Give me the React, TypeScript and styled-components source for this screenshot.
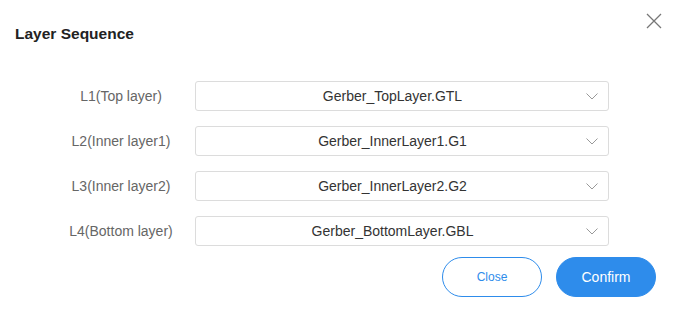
import React from "react";
import styled, { createGlobalStyle } from "styled-components";

const Global = createGlobalStyle`
  html, body { margin: 0; padding: 0; background: #fff; }
  body { font-family: "Liberation Sans", Arial, sans-serif; }
  * { box-sizing: border-box; }
`;

const Dialog = styled.div`
  width: 676px;
  height: 312px;
  background: #fff;
  display: flex;
  flex-direction: column;
`;

const Header = styled.div`
  position: relative;
  height: 81px;
  padding: 24px 15px 0;
`;

const Title = styled.h2`
  margin: 0;
  font-size: 15.5px;
  font-weight: bold;
  color: #222;
  line-height: 20px;
`;

const CloseIcon = styled.button`
  position: absolute;
  top: 13px;
  right: 14px;
  width: 16px;
  height: 16px;
  padding: 0;
  border: none;
  background: transparent;
  display: flex;
  cursor: pointer;
`;

const Rows = styled.div`
  display: flex;
  flex-direction: column;
  gap: 15px;
  padding-left: 47px;
`;

const Row = styled.div`
  display: flex;
  align-items: center;
`;

const Label = styled.div`
  width: 148px;
  text-align: center;
  font-size: 14px;
  color: #666;
`;

const Select = styled.div`
  width: 414px;
  height: 30px;
  border: 1px solid #dcdcdc;
  border-radius: 3px;
  display: flex;
  align-items: center;
  padding: 0 10px 0 3px;
`;

const SelectText = styled.span`
  flex: 1;
  text-align: center;
  font-size: 14px;
  color: #333;
`;

const Footer = styled.div`
  display: flex;
  justify-content: flex-end;
  gap: 14px;
  padding: 11px 20px 0 0;
`;

const Button = styled.button<{ $primary?: boolean }>`
  width: 100px;
  height: 40px;
  border-radius: 20px;
  font-family: "Liberation Sans", Arial, sans-serif;
  cursor: pointer;
  border: 1px solid #2e8ceb;
  background: ${(p) => (p.$primary ? "#2e8ceb" : "#fff")};
  color: ${(p) => (p.$primary ? "#fff" : "#2e8ceb")};
  font-size: ${(p) => (p.$primary ? "14px" : "12px")};
`;

const Chevron = () => (
  <svg width="12" height="7" viewBox="0 0 12 7" fill="none">
    <path d="M0.5 0.5 L6 6 L11.5 0.5" stroke="#999" strokeWidth="1" />
  </svg>
);

const layers = [
  ["L1(Top layer)", "Gerber_TopLayer.GTL"],
  ["L2(Inner layer1)", "Gerber_InnerLayer1.G1"],
  ["L3(Inner layer2)", "Gerber_InnerLayer2.G2"],
  ["L4(Bottom layer)", "Gerber_BottomLayer.GBL"],
];

export default function App() {
  return (
    <>
      <Global />
      <Dialog>
        <Header>
          <Title>Layer Sequence</Title>
          <CloseIcon aria-label="close">
            <svg width="16" height="16" viewBox="0 0 16 16">
              <path d="M1 1 L15 15 M15 1 L1 15" stroke="#777" strokeWidth="1.3" />
            </svg>
          </CloseIcon>
        </Header>
        <Rows>
          {layers.map(([l, f]) => (
            <Row key={l}>
              <Label>{l}</Label>
              <Select>
                <SelectText>{f}</SelectText>
                <Chevron />
              </Select>
            </Row>
          ))}
        </Rows>
        <Footer>
          <Button>Close</Button>
          <Button $primary>Confirm</Button>
        </Footer>
      </Dialog>
    </>
  );
}
